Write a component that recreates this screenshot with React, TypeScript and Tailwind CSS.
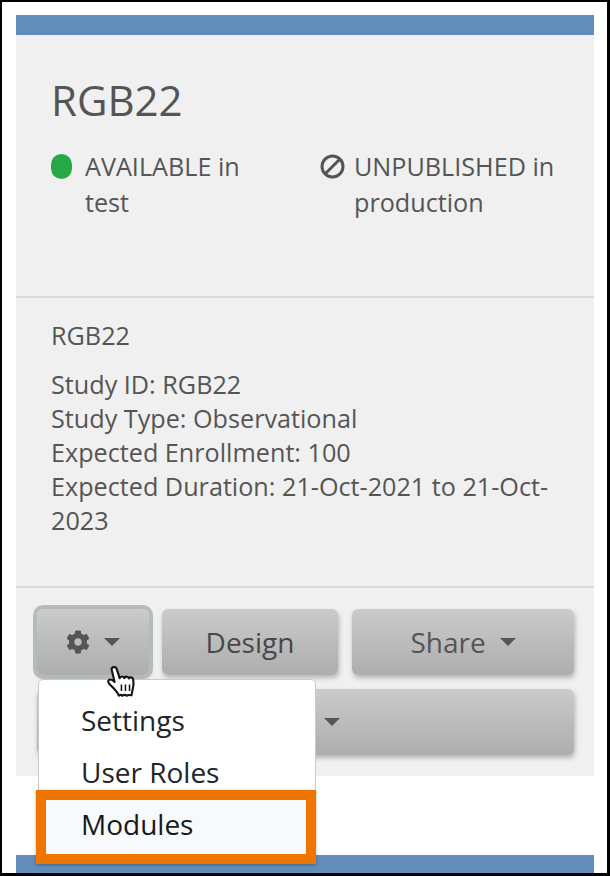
import React from 'react';
import { FaCog } from 'react-icons/fa';

const font = "font-['Open_Sans',sans-serif]";
const btn = "flex items-center justify-center rounded-[6px] bg-gradient-to-b from-[#cbcbcb] to-[#adadad] text-[28px] text-[#555555] shadow-[1px_3px_5px_rgba(0,0,0,0.25)]";

const Caret = ({ className = '' }: { className?: string }) => (
    <span className={`inline-block h-0 w-0 border-x-[8px] border-t-[8px] border-x-transparent border-t-[#555555] ${className}`} />
);

const BanIcon = () => (
    <svg width="25" height="25" viewBox="0 0 25 25" className="mr-[9px] mt-[6px] shrink-0">
        <circle cx="12.500" cy="12.500" r="10.500" fill="none" stroke="#555555" strokeWidth="3" />
        <path d="M5 20L20 5" stroke="#555555" strokeWidth="3" />
    </svg>
);

const HandCursor = () => (
    <svg width="30" height="34" viewBox="0 0 26 29" className="absolute left-[105px] top-[661px]">
        <path
            d="M4 5.500c0-3 4-3 4.600 0L11 13c.3-2 3.400-2.200 4 0 .3-1.800 3.400-2 4 .2.500-1.400 3.200-1.400 3.600.6.600 3 .4 6-.4 9l-1 5c-2-.6-3-.6-4 .4-1.400-1.200-2.600-1.200-4 0-1-1-2-1-3-.2-1-3-4-6-6.600-8.500-2-1.800-3.400-3.800-2-5 1.400-1 3.400 0 5 1.700z"
            fill="#ffffff"
            stroke="#111111"
            strokeWidth="1.800"
            strokeLinejoin="round"
        />
        <path d="M12.500 18.500v5.500M16 18.500v5.500M19.500 18.500v5.500" stroke="#111111" strokeWidth="1.300" fill="none" />
    </svg>
);

const App = () => {
    return (
        <div className={`relative h-[876px] w-[610px] overflow-hidden border-2 border-b-[3px] border-r-[3px] border-black bg-white pl-[14px] pr-[13px] pt-[13px] ${font}`}>
            <div className="h-[20px] bg-[#628dbb]" />

            <div className="h-[741px] bg-[#f0f0f0] text-[#555555]">
                {/* Header */}
                <div className="h-[263px] border-b-2 border-[#d9d9d9] pl-[35px] pr-[10px] pt-[37px]">
                    <h1 className="text-[42px] leading-[56px]">RGB22</h1>
                    <div className="mt-[20px] flex text-[25.2px] leading-[36px]">
                        <div className="flex w-[269px] shrink-0">
                            <span className="mr-[13px] mt-[6px] h-[25px] w-[21px] shrink-0 rounded-full bg-[#28a745]" />
                            <span className="w-[170px]">AVAILABLE in test</span>
                        </div>
                        <div className="flex">
                            <BanIcon />
                            <span className="w-[215px]">UNPUBLISHED in production</span>
                        </div>
                    </div>
                </div>

                {/* Study details */}
                <div className="h-[290px] border-b-2 border-[#d9d9d9] px-[35px] pt-[20px] text-[25.2px] leading-[34px]">
                    <p>RGB22</p>
                    <p className="mt-[15px]">Study ID: RGB22</p>
                    <p>Study Type: Observational</p>
                    <p>Expected Enrollment: 100</p>
                    <p>Expected Duration: 21-Oct-2021 to 21-Oct-2023</p>
                </div>

                {/* Actions */}
                <div className="pl-[21px] pr-[20px] pt-[21px]">
                    <div className="flex">
                        <div className={`${btn} h-[66px] w-[112px] gap-[14px] outline outline-4 outline-[#b3bbbf]`}>
                            <FaCog className="h-[24px] w-[24px]" />
                            <Caret />
                        </div>
                        <div className={`${btn} ml-[13px] h-[66px] w-[176px] !text-[#484848]`}>Design</div>
                        <div className={`${btn} ml-[14px] h-[66px] w-[222px] gap-[14px]`}>
                            Share
                            <Caret />
                        </div>
                    </div>
                    <div className={`${btn} mt-[14px] h-[66px] w-[537px] pl-[53px]`}>
                        <Caret />
                    </div>
                </div>
            </div>

            <div className="mt-[79px] h-[18px] bg-[#628dbb]" />

            {/* Dropdown menu */}
            <div className="absolute left-[36px] top-[677px] h-[120px] w-[278px] rounded-[5px] border border-[#c9c9c9] bg-white pl-[42px] pt-[14px] text-[28px] leading-[52px] text-[#212529]">
                <div>Settings</div>
                <div>User Roles</div>
            </div>
            <div className="absolute left-[34px] top-[788px] h-[74px] w-[280px] border-[10px] border-[#ee7600] bg-[#f8f9fa] pl-[35px] text-[28px] leading-[48px] text-[#16181b] shadow-[0_1px_3px_rgba(0,0,0,0.3)]">
                Modules
            </div>

            <HandCursor />
        </div>
    );
};

export default App;
